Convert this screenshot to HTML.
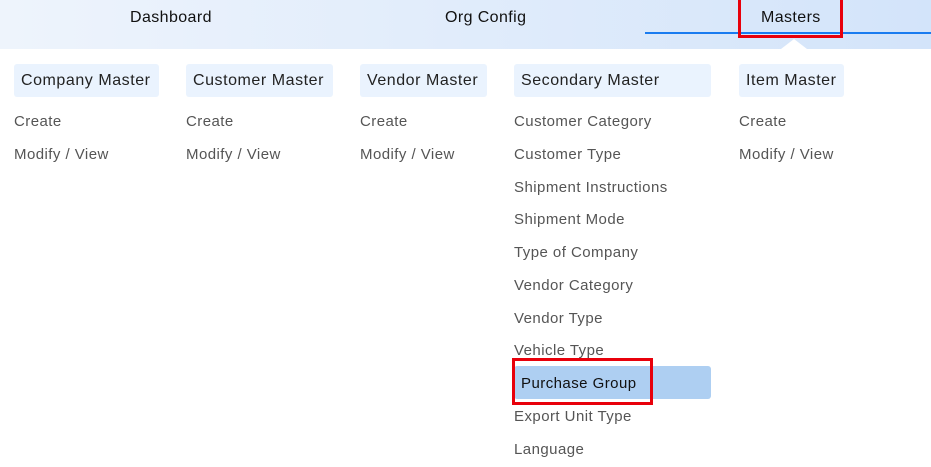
<html><head><style>
body{margin:0;width:931px;height:467px;overflow:hidden;background:#fff;font-family:"Liberation Sans",sans-serif;position:relative}
.hdr{position:absolute;left:0;top:0;width:931px;height:49px;background:linear-gradient(90deg,#eef4fc,#d3e4fa)}
.t{position:absolute;top:9px;font-size:16px;color:#111;letter-spacing:0.4px}
.line{position:absolute;left:645px;top:32px;width:286px;height:2px;background:#1a7cf0}
.notch{position:absolute;left:781px;top:39px;width:0;height:0;border-left:13px solid transparent;border-right:13px solid transparent;border-bottom:10px solid #fff}
.h{position:absolute;top:64px;height:33px;line-height:34px;background:#eaf3fe;border-radius:3px;font-size:16px;color:#222;padding-left:7px;box-sizing:border-box;letter-spacing:0.55px;white-space:nowrap}
.i{position:absolute;font-size:15px;color:#555;line-height:20px;letter-spacing:0.45px;white-space:nowrap;margin-top:1px}
.red{position:absolute;border:3px solid #e8000b;box-sizing:border-box}
</style></head><body>
<div class="hdr"></div>
<div class="t" style="left:130px">Dashboard</div>
<div class="t" style="left:445px">Org Config</div>
<div class="line"></div>
<div class="t" style="left:761px">Masters</div>
<div class="red" style="left:738px;top:-3px;width:105px;height:41px"></div>
<div class="notch"></div>

<div class="h" style="left:14px;width:145px">Company Master</div>
<div class="h" style="left:186px;width:147px">Customer Master</div>
<div class="h" style="left:360px;width:127px">Vendor Master</div>
<div class="h" style="left:514px;width:197px">Secondary Master</div>
<div class="h" style="left:739px;width:105px">Item Master</div>

<div class="i" style="left:14px;top:111px">Create</div>
<div class="i" style="left:14px;top:144px">Modify / View</div>
<div class="i" style="left:186px;top:111px">Create</div>
<div class="i" style="left:186px;top:144px">Modify / View</div>
<div class="i" style="left:360px;top:111px">Create</div>
<div class="i" style="left:360px;top:144px">Modify / View</div>
<div class="i" style="left:739px;top:111px">Create</div>
<div class="i" style="left:739px;top:144px">Modify / View</div>

<div class="i" style="left:514px;top:111px">Customer Category</div>
<div class="i" style="left:514px;top:144px">Customer Type</div>
<div class="i" style="left:514px;top:177px">Shipment Instructions</div>
<div class="i" style="left:514px;top:209px">Shipment Mode</div>
<div class="i" style="left:514px;top:242px">Type of Company</div>
<div class="i" style="left:514px;top:275px">Vendor Category</div>
<div class="i" style="left:514px;top:308px">Vendor Type</div>
<div class="i" style="left:514px;top:340px">Vehicle Type</div>
<div style="position:absolute;left:514px;top:366px;width:197px;height:33px;background:#aecff2;border-radius:3px"></div>
<div class="i" style="left:521px;top:373px;color:#111">Purchase Group</div>
<div class="red" style="left:512px;top:358px;width:141px;height:47px"></div>
<div class="i" style="left:514px;top:406px">Export Unit Type</div>
<div class="i" style="left:514px;top:439px">Language</div>
</body></html>
